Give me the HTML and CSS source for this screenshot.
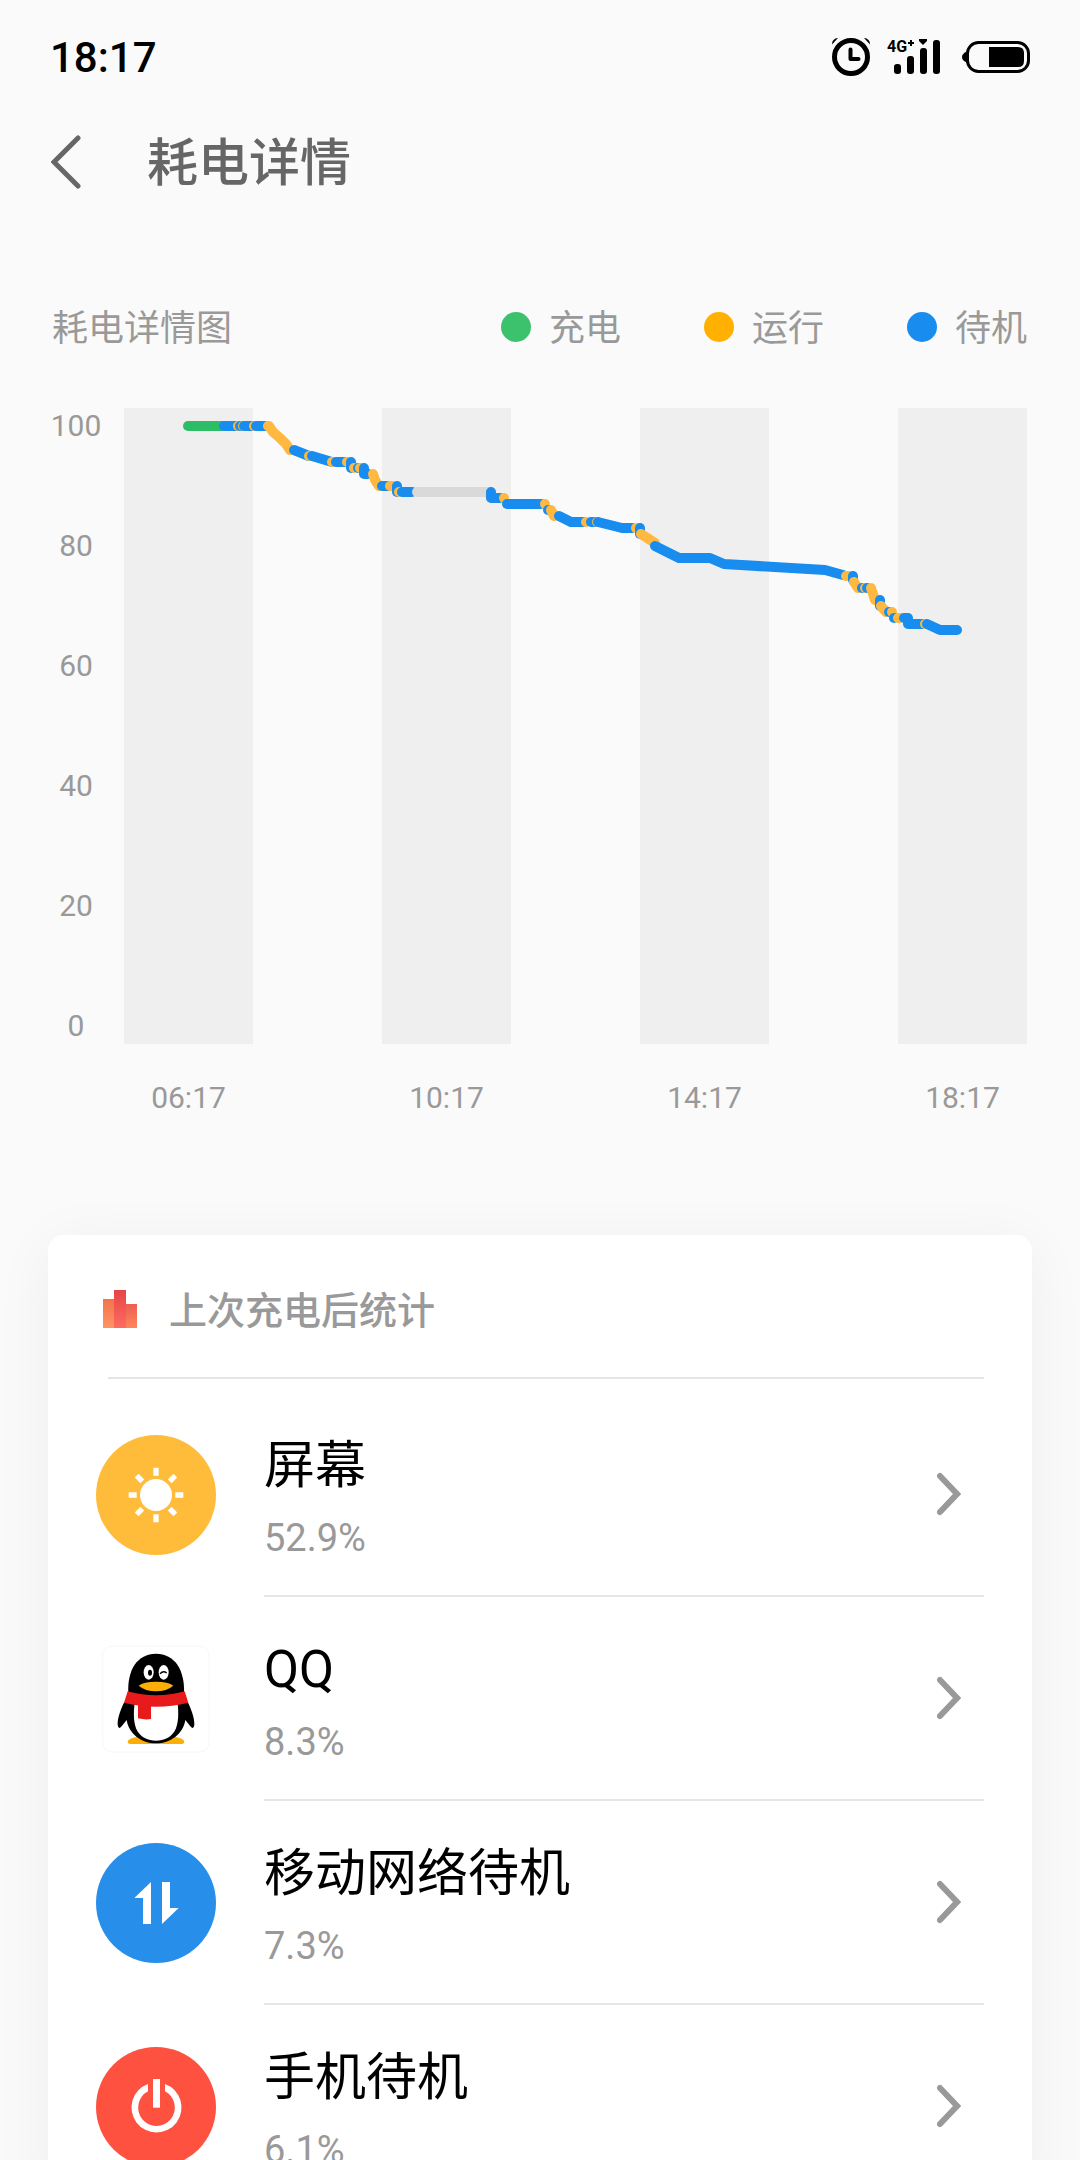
FILE: index.html
```html
<!DOCTYPE html>
<html lang="zh-CN">
<head>
<meta charset="utf-8">
<meta name="viewport" content="width=device-width">
<title>耗电详情</title>
<link rel="stylesheet" href="styles.css">
</head>
<body>
<div class="screen">
  <div class="status-bar">
    <span class="clock">18:17</span>
    <div class="status-icons">
      <svg width="40" height="40" viewBox="831 37 40 40" aria-label="闹钟">
        <circle cx="851" cy="57" r="16.5" fill="none" stroke="#000" stroke-width="5"/>
        <path d="M850.5 49.5v9.5h8" fill="none" stroke="#000" stroke-width="4" stroke-linecap="round" stroke-linejoin="round"/>
        <path d="M832 44.500q0-6 6-6.500zM870 44.500q0-6-6-6.500z"/>
      </svg>
      <svg width="59" height="40" viewBox="887 37 59 40" aria-label="4G+ 信号">
        <text class="network" x="887" y="52">4G</text>
        <path d="M908 43h6M911 40v6" stroke="#000" stroke-width="2"/>
        <path d="M919 39h8v2l-4 4-4-4z"/>
        <rect x="894" y="64" width="7" height="10" rx="3"/>
        <rect x="907" y="56" width="7" height="18" rx="3"/>
        <rect x="920" y="48" width="7" height="26" rx="3"/>
        <rect x="933" y="40" width="7" height="34" rx="3"/>
      </svg>
      <svg width="68" height="40" viewBox="962 37 68 40" aria-label="电池">
        <rect x="967.500" y="42.500" width="61" height="29" rx="11" fill="none" stroke="#000" stroke-width="3"/>
        <path d="M967 51.500q-5 2-5 5.500t5 5.500z"/>
        <path d="M989 47h29q6 0 6 6v8q0 6-6 6h-29z"/>
      </svg>
    </div>
  </div>

  <header class="title-bar">
    <button class="back" type="button" aria-label="返回">
      <svg width="30" height="54" viewBox="0 0 30 54"><path d="M27 3 3 27l24 24" fill="none" stroke="#666" stroke-width="5" stroke-linecap="round"/></svg>
    </button>
    <h1 class="title">耗电详情</h1>
  </header>

  <section class="chart">
    <div class="chart-head">
      <h2 class="chart-title">耗电详情图</h2>
      <ul class="legend">
        <li class="legend-item"><span class="dot dot-charge"></span><span class="legend-label">充电</span></li>
        <li class="legend-item"><span class="dot dot-run"></span><span class="legend-label">运行</span></li>
        <li class="legend-item"><span class="dot dot-idle"></span><span class="legend-label">待机</span></li>
      </ul>
    </div>
    <div class="plot">
      <div class="y-axis">
        <span>100</span><span>80</span><span>60</span><span>40</span><span>20</span><span>0</span>
      </div>
      <svg class="graph" viewBox="124 408 903 636" role="img" aria-label="电量曲线">
        <g fill="#efefef">
          <rect x="124" y="408" width="129" height="636"/>
          <rect x="382" y="408" width="129" height="636"/>
          <rect x="640" y="408" width="129" height="636"/>
          <rect x="898" y="408" width="129" height="636"/>
        </g>
        <g class="line">
          <path class="charge" d="M188 426H222"/>
          <path class="idle" d="M224 426H240"/>
          <path class="run" d="M238 426h1"/>
          <path class="idle" d="M240 426H250"/>
          <path class="run" d="M243 426h0"/>
          <path class="idle" d="M244 426H252"/>
          <path class="run" d="M254 426h0"/>
          <path class="idle" d="M256 426H265"/>
          <path class="run" d="M268 426h1L273 432 280 438 286 444 290 450"/>
          <path class="idle" d="M294 450 309 456"/>
          <path class="run" d="M309 456h1"/>
          <path class="idle" d="M312 456 332 462"/>
          <path class="run" d="M332 462h1"/>
          <path class="idle" d="M336 462H345"/>
          <path class="run" d="M347 462h0"/>
          <path class="idle" d="M351 462v6"/>
          <path class="run" d="M354 468h0"/>
          <path class="idle" d="M358 468h1"/>
          <path class="run" d="M360 468h0"/>
          <path class="idle" d="M364 468v6h4"/>
          <path class="run" d="M373 474 375 480 379 486"/>
          <path class="idle" d="M382 486H388"/>
          <path class="run" d="M390 486h2"/>
          <path class="idle" d="M397 486v6"/>
          <path class="run" d="M399 492h0"/>
          <path class="idle" d="M402 492H412"/>
          <path class="off" d="M417 492H490"/>
          <path class="idle" d="M491 492v6H500"/>
          <path class="run" d="M504 498h0"/>
          <path class="idle" d="M507 504H541"/>
          <path class="run" d="M545 504h0"/>
          <path class="idle" d="M548 510h0"/>
          <path class="run" d="M551 510 554 516"/>
          <path class="idle" d="M559 516 571 522H583"/>
          <path class="run" d="M586 522h0"/>
          <path class="idle" d="M591 522H597"/>
          <path class="run" d="M597 522h0"/>
          <path class="idle" d="M598 522 622 528H632"/>
          <path class="run" d="M636 528h0"/>
          <path class="idle" d="M640 528v6"/>
          <path class="run" d="M641 534 655 543"/>
          <path class="idle" d="M655 546 679 558H710L724 564 825 570 843 575"/>
          <path class="run" d="M846 576h3"/>
          <path class="idle" d="M853 576v4"/>
          <path class="run" d="M854 582 858 588"/>
          <path class="idle" d="M862 588h0"/>
          <path class="run" d="M865 588h0"/>
          <path class="idle" d="M867 588h0"/>
          <path class="run" d="M871 588 875 600"/>
          <path class="idle" d="M880 600v6"/>
          <path class="run" d="M881 606 886 612"/>
          <path class="idle" d="M889 612h0"/>
          <path class="run" d="M892 612h0"/>
          <path class="idle" d="M894 618h0"/>
          <path class="run" d="M898 618h2"/>
          <path class="idle" d="M904 618h4v6H922"/>
          <path class="run" d="M925 624h0"/>
          <path class="idle" d="M927 624 940 630H957"/>
        </g>
      </svg>
      <div class="x-axis">
        <span>06:17</span><span></span><span>10:17</span><span></span><span>14:17</span><span></span><span>18:17</span>
      </div>
    </div>
  </section>

  <section class="card">
    <div class="card-head">
      <svg width="34" height="38" viewBox="0 0 34 38" aria-hidden="true">
        <defs>
          <linearGradient id="bar-a" x2="0" y2="1"><stop stop-color="#f4724b"/><stop offset="1" stop-color="#ff9466"/></linearGradient>
          <linearGradient id="bar-b" x2="0" y2="1"><stop stop-color="#e64545"/><stop offset="1" stop-color="#ff6b61"/></linearGradient>
          <linearGradient id="bar-c" x2="0" y2="1"><stop stop-color="#ec5f52"/><stop offset="1" stop-color="#ff855b"/></linearGradient>
        </defs>
        <rect y="9" width="11" height="29" fill="url(#bar-a)"/>
        <rect x="11" width="12" height="38" fill="url(#bar-b)"/>
        <rect x="23" y="14" width="11" height="24" fill="url(#bar-c)"/>
      </svg>
      <h2 class="card-title">上次充电后统计</h2>
    </div>
    <ul class="apps">
      <li>
        <a class="app" href="#screen">
          <svg class="app-icon" viewBox="-180 -180 360 360" aria-hidden="true">
            <circle r="180" fill="#ffbc3b"/>
            <circle r="48" fill="#fff"/>
            <g stroke="#fff" stroke-width="16">
              <path d="M0-82v24M0 58v24M-82 0h24M58 0h24"/>
              <path d="M0-82v24M0 58v24M-82 0h24M58 0h24" transform="rotate(45)"/>
            </g>
          </svg>
          <span class="app-row">
            <span class="app-text"><span class="app-name">屏幕</span><span class="app-share">52.9%</span></span>
            <svg class="chevron" viewBox="0 0 24 44" aria-hidden="true"><path d="M3 4 20 22 3 40"/></svg>
          </span>
        </a>
      </li>
      <li>
        <a class="app" href="#qq">
          <svg class="app-icon" viewBox="48 657 360 360" aria-hidden="true">
            <rect x="68" y="678" width="319" height="318" rx="28" fill="#fff" stroke="#f1f1f1" stroke-width="2"/>
            <path d="M143 966q0-14 40-16h90q40 2 40 16 0 6-12 6H155q-12 0-12-6z" fill="#fbae08"/>
            <path d="M133 846C122 868 112 895 113 915q2 15 12 4l15-19c6 42 45 70 88 70s82-28 88-70l15 19q10 11 12-4c1-20-9-47-20-69z"/>
            <path d="M164 850C160 880 160 912 172 933 184 953 204 962 228 962s44-9 56-29c12-21 12-53 9-83z" fill="#fff"/>
            <path d="M145 820C141 750 172 701 228 701s87 49 84 119q-42 12-84 12t-83-12z"/>
            <path d="M143 814q85 24 171 0l11 34q-96 24-193 0z" fill="#e91a1b"/>
            <path d="M174 850h39v47q-17 3-39-2z" fill="#e91a1b"/>
            <ellipse cx="206" cy="757" rx="15" ry="22" fill="#fff"/>
            <ellipse cx="251" cy="757" rx="15" ry="22" fill="#fff"/>
            <ellipse cx="210" cy="758" rx="6" ry="9"/>
            <path d="M240 761q10-10 20-2" fill="none" stroke="#000" stroke-width="4"/>
            <path d="M176 797q14-12 52-12t52 12q-20 17-52 17t-52-17z" fill="#fbae08"/>
          </svg>
          <span class="app-row">
            <span class="app-text"><span class="app-name">QQ</span><span class="app-share">8.3%</span></span>
            <svg class="chevron" viewBox="0 0 24 44" aria-hidden="true"><path d="M3 4 20 22 3 40"/></svg>
          </span>
        </a>
      </li>
      <li>
        <a class="app" href="#mobile-network">
          <svg class="app-icon" viewBox="48 129 360 360" aria-hidden="true">
            <circle cx="228" cy="309" r="180" fill="#278eea"/>
            <path d="M213 246v126h-24v-78h-26zM246 246h24v78h26l-50 48z" fill="#fff"/>
          </svg>
          <span class="app-row">
            <span class="app-text"><span class="app-name">移动网络待机</span><span class="app-share">7.3%</span></span>
            <svg class="chevron" viewBox="0 0 24 44" aria-hidden="true"><path d="M3 4 20 22 3 40"/></svg>
          </span>
        </a>
      </li>
      <li>
        <a class="app" href="#phone-idle">
          <svg class="app-icon" viewBox="48 741 360 360" aria-hidden="true">
            <circle cx="228" cy="921" r="180" fill="#fe5140"/>
            <path d="M204 852v22a55 55 0 1 0 51 0v-22a75 75 0 1 1-51 0z" fill="#fff"/>
            <path d="M219 837h21v86h-21z" fill="#fff"/>
          </svg>
          <span class="app-row">
            <span class="app-text"><span class="app-name">手机待机</span><span class="app-share">6.1%</span></span>
            <svg class="chevron" viewBox="0 0 24 44" aria-hidden="true"><path d="M3 4 20 22 3 40"/></svg>
          </span>
        </a>
      </li>
    </ul>
  </section>
</div>
</body>
</html>
```

FILE: styles.css
```css
* {
  box-sizing: border-box;
}

body {
  margin: 0;
  background: #fafafa;
  color: #000;
  font-family: Roboto, "Noto Sans CJK SC", sans-serif;
}

h1,
h2,
ul {
  margin: 0;
  padding: 0;
}

ul {
  list-style: none;
}

svg {
  display: block;
}

.screen {
  height: 100vh;
  overflow: hidden;
}

/* Status bar */
.status-bar {
  display: flex;
  align-items: center;
  justify-content: space-between;
  height: 114px;
  padding: 0 50px;
}

.clock {
  padding-top: 2px;
  font-size: 42px;
  font-weight: 500;
  line-height: 48px;
}

.status-icons {
  display: flex;
  gap: 16px;
}

.network {
  font-size: 16px;
  font-weight: 700;
}

/* Title bar */
.title-bar {
  display: flex;
  align-items: center;
  gap: 66px;
  height: 96px;
  padding: 0 51px;
}

.back {
  padding: 0;
  border: 0;
  background: none;
}

.title {
  padding-top: 4px;
  color: #666;
  font-size: 51px;
  font-weight: 500;
  line-height: 72px;
}

/* Chart */
.chart {
  padding: 90px 53px 0 52px;
  color: #999;
}

.chart-head {
  display: flex;
  align-items: center;
  justify-content: space-between;
  height: 54px;
}

.chart-title,
.legend-label {
  padding-top: 4px;
  font-size: 36px;
  font-weight: 400;
  line-height: 50px;
}

.legend {
  display: flex;
  gap: 83px;
}

.legend-item {
  display: flex;
  align-items: center;
  gap: 18px;
}

.dot {
  width: 30px;
  height: 30px;
  border-radius: 50%;
}

.dot-charge {
  background: #3cc26d;
}

.dot-run {
  background: #ffb000;
}

.dot-idle {
  background: #188def;
}

.plot {
  display: grid;
  grid-template-columns: 48px 1fr;
  column-gap: 24px;
  padding-top: 54px;
  font-size: 30px;
  line-height: 36px;
  text-align: center;
}

.y-axis {
  display: flex;
  flex-direction: column;
  align-items: center;
  justify-content: space-between;
}

.graph {
  width: 100%;
}

.line {
  fill: none;
  stroke-width: 10;
  stroke-linecap: round;
  stroke-linejoin: round;
}

.charge {
  stroke: #2ebd67;
}

.run {
  stroke: #ffb940;
}

.idle {
  stroke: #188def;
}

.off {
  stroke: #d9d9d9;
}

.x-axis {
  display: grid;
  grid-column: 2;
  grid-template-columns: repeat(7, 1fr);
  padding-top: 36px;
}

/* Usage card */
.card {
  margin: 119px 48px 0;
  padding: 0 48px;
  border-radius: 15px;
  background: #fff;
  box-shadow: 0 9px 60px rgba(0, 0, 0, 0.05);
}

.card-head {
  display: flex;
  align-items: center;
  gap: 32px;
  height: 144px;
  margin-left: 12px;
  padding-top: 6px;
  border-bottom: 2px solid #e5e5e5;
}

.card-head svg {
  margin-left: -5px;
}

.card-title {
  padding-top: 4px;
  color: #999;
  font-size: 38px;
  font-weight: 500;
  line-height: 54px;
}

.apps {
  padding-top: 14px;
}

.app {
  display: flex;
  align-items: center;
  gap: 48px;
  color: inherit;
  text-decoration: none;
}

.app-icon {
  flex: none;
  width: 120px;
  height: 120px;
}

.app-row {
  display: flex;
  flex: 1;
  align-items: center;
  justify-content: space-between;
  height: 204px;
  padding-right: 23px;
  border-bottom: 2px solid #e5e5e5;
}

.app-text {
  display: flex;
  flex-direction: column;
  padding-top: 10px;
}

.app-name {
  font-size: 51px;
  line-height: 78px;
}

.app-share {
  color: #999;
  font-size: 38px;
  line-height: 66px;
}

.chevron {
  width: 24px;
  height: 44px;
  fill: none;
  stroke: #999;
  stroke-width: 6;
  stroke-linecap: round;
}
```
